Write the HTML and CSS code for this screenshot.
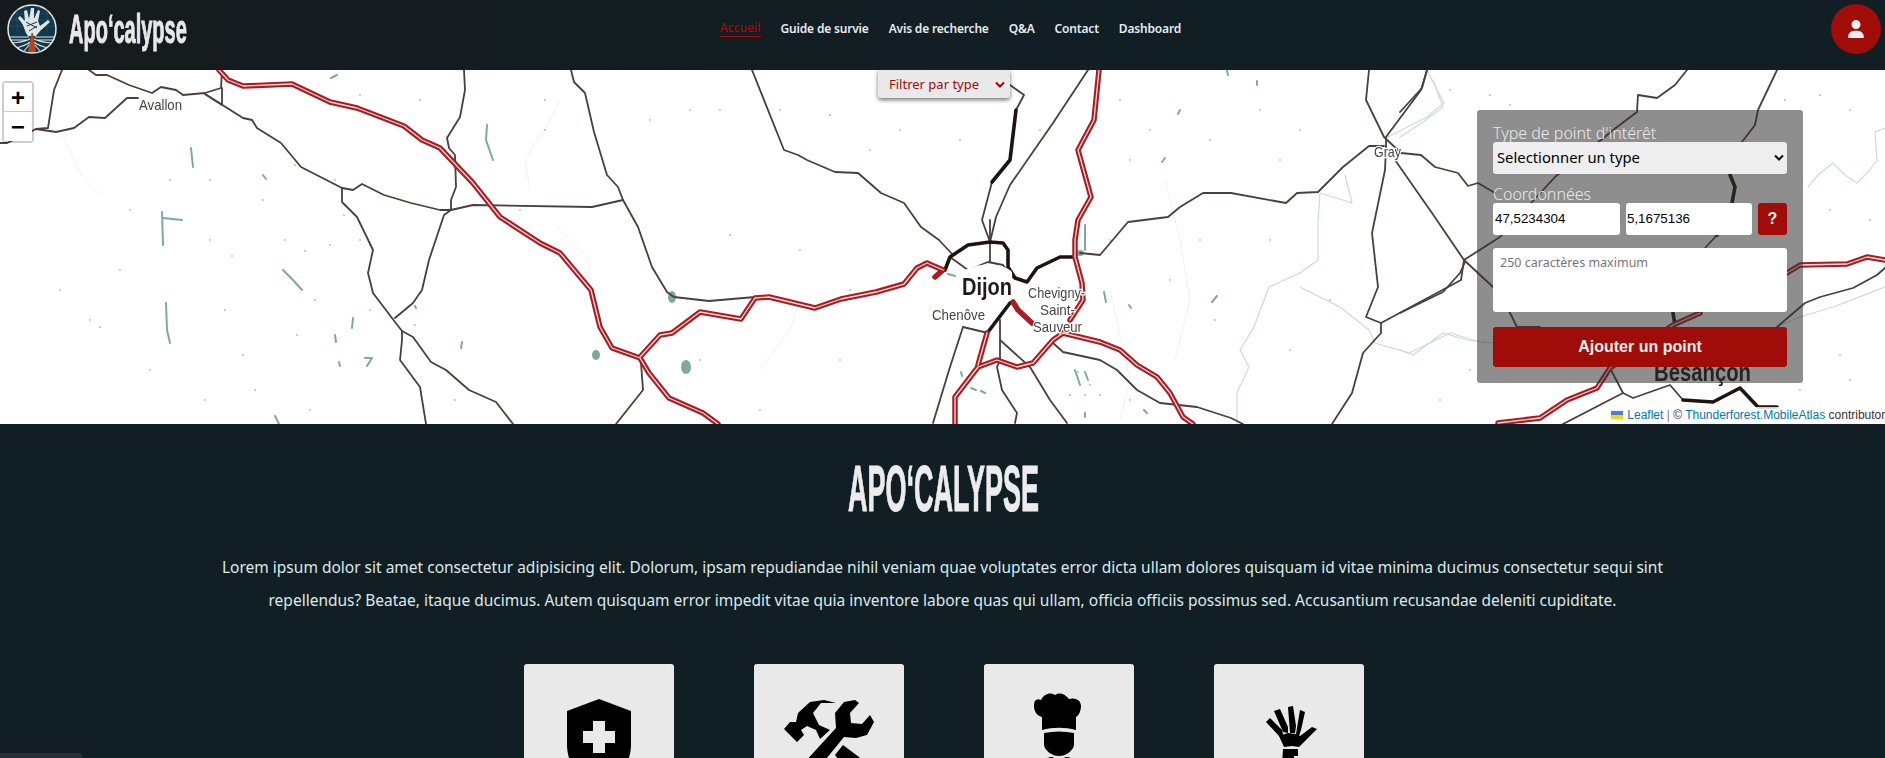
FILE: index.html
```html
<!DOCTYPE html>
<html lang="fr">
<head>
<meta charset="utf-8">
<title>Apo'calypse</title>
<link rel="stylesheet" href="styles.css">
</head>
<body>
<header class="topbar">
  <a class="brand">
    <svg class="logo" viewBox="0 0 50 50">
      <circle class="logo-disc" cx="25" cy="25" r="24"/>
      <path class="logo-grid" d="M8 10H42M4 16H46M2 22H48M10 4V30M18 2V30M32 2V30M40 4V30"/>
      <path class="logo-hand" d="M19 29L16 21L11 14L13 12L18 17L17 7L20 6L22 15L24 4L27 4L27 15L31 6L33 7L31 17L33 22L41 16L43 18L33 27L29 32L21 32Z"/>
      <path class="logo-line" d="M19 18L30 24M20 22L30 18M22 27L30 22"/>
      <path class="logo-land" d="M3 33H22M28 33H47M4 36H20M30 36H46M5 39C12 38 18 38 23 35M45 39C38 38 32 38 27 35M10 44C15 42 20 41 23 38M40 44C35 42 30 41 27 38M17 47L23 40M33 47L27 40"/>
      <polygon class="logo-tower" points="24.5,29 26,29 29,48 21,48"/>
    </svg>
    <span class="wordmark"><span class="wordmark-inner">Apo‘calypse</span></span>
  </a>
  <nav class="links">
    <a class="link active">Accueil</a>
    <a class="link">Guide de survie</a>
    <a class="link">Avis de recherche</a>
    <a class="link">Q&amp;A</a>
    <a class="link">Contact</a>
    <a class="link">Dashboard</a>
  </nav>
  <a class="avatar">
    <svg class="avatar-icon" viewBox="0 0 448 512"><path d="M224 256A128 128 0 1 0 224 0a128 128 0 1 0 0 256zm-45.700 48C79.800 304 0 383.800 0 482.300C0 498.700 13.300 512 29.700 512H418.300c16.400 0 29.700-13.300 29.700-29.700C448 383.800 368.200 304 269.700 304H178.300z"/></svg>
  </a>
</header>

<main>
  <section class="map">
    <svg class="map-canvas" viewBox="0 70 1885 354">
      <g class="river">
        <polyline points="1300,273 1269,287 1254,327 1240,350 1249,367 1237,393 1237,424"/>
        <polyline points="1300,273 1318,260 1318,223 1320,193 1352,203 1345,175"/>
        <polyline points="1300,287 1340,307 1369,330 1375,343 1409,353 1450,333 1484,343"/>
        <polyline points="1386,138 1427,117 1444,103 1432,80 1427,70"/>
        <polyline points="1433,80 1443,107 1423,122 1400,137"/>
        <polyline points="1400,350 1413,355 1443,333 1467,340 1493,343"/>
        <polyline points="1808,187 1818,175 1833,163 1845,175 1857,183 1868,172 1877,160 1875,132 1885,128"/>
        <polyline points="1885,287 1833,307 1800,317 1777,327"/>
      </g>
      <g class="river-faint">
        <polyline points="62,133 78,168 83,177 100,195"/>
        <polyline points="530,190 525,160 550,120 560,100"/>
        <polyline points="555,225 590,260 585,290"/>
        <polyline points="760,370 790,330 800,300"/>
        <polyline points="1165,180 1180,240 1190,300 1175,360"/>
        <polyline points="1110,290 1130,380 1120,420"/>
      </g>
      <path class="specks" d="M232 256h0M305 251h0M100 327h0M243 355h0M297 335h0M344 215h0M263 200h0M120 270h0M210 240h0M90 320h0M150 370h0M60 290h0M285 240h0M315 300h0M370 310h0M330 245h0M360 240h0M335 180h0M295 165h0M210 180h0M170 180h0M130 210h0M225 310h0M255 390h0M205 400h0M310 410h0M370 245h0M415 325h0M455 400h0M520 210h0M545 130h0M360 95h0M420 100h0M545 100h0M650 120h0M690 110h0M720 110h0M780 110h0M830 115h0M870 150h0M900 130h0M960 140h0M730 235h0M800 250h0M850 290h0M840 360h0M760 410h0M700 360h0M1040 130h0M1120 100h0M1130 160h0M1150 130h0M1210 140h0M1260 110h0M1300 130h0M1280 160h0M1110 240h0M1170 280h0M1200 240h0M1215 320h0M1270 240h0M1290 350h0M1330 300h0M1450 90h0M1490 95h0M1510 105h0M1470 370h0M1440 400h0M1785 100h0M1820 95h0M1850 110h0M1830 210h0M1870 220h0M1800 390h0M1850 380h0M1840 355h0M1130 400h0M1100 395h0M1070 395h0M1085 395h0M1078 372h0M1090 385h0"/>
      <g class="lake">
        <polyline points="487,125 486,140 493,160"/>
        <polyline points="191,148 193,167"/>
        <polyline points="162,212 163,245"/>
        <polyline points="163,218 182,220"/>
        <polyline points="166,303 167,330 170,343"/>
        <polyline points="283,270 293,280 302,290"/>
        <polyline points="331,78 337,75"/>
        <polyline points="263,175 266,179"/>
        <polyline points="335,335 336,342"/>
        <polyline points="353,318 352,328"/>
        <polyline points="365,358 372,358 367,366"/>
        <polyline points="339,362 340,366"/>
        <polyline points="275,416 279,424"/>
        <polyline points="462,342 461,348"/>
        <polyline points="415,306 416,308"/>
        <polyline points="1217,296 1212,302"/>
        <polyline points="1165,158 1162,162"/>
        <polyline points="1180,110 1178,114"/>
        <polyline points="1227,70 1228,75"/>
        <polyline points="1257,81 1257,85"/>
        <polyline points="1085,225 1085,250"/>
        <polyline points="1075,370 1080,385"/>
        <polyline points="1085,372 1088,380"/>
        <polyline points="971,388 976,390"/>
        <polyline points="981,391 985,393"/>
        <polyline points="961,372 962,376"/>
        <polyline points="1104,292 1106,302"/>
        <polyline points="1129,305 1131,308"/>
        <polyline points="1085,413 1085,417"/>
        <polyline points="1144,410 1147,413"/>
        <polyline points="948,274 955,276"/>
      </g>
      <g class="lake-fill">
        <ellipse cx="596" cy="355" rx="4" ry="5"/>
        <ellipse cx="686" cy="367" rx="5" ry="7"/>
        <ellipse cx="672" cy="297" rx="4" ry="6"/>
        <ellipse cx="1080" cy="253" rx="4" ry="3"/>
      </g>
      <g class="road">
        <polyline points="62,70 54,90 48,128 36,129"/>
        <polyline points="89,70 96,75 107,75 129,85 152,93 161,87 176,90 183,95 205,93 221,88 222,70"/>
        <polyline points="222,88 222,105 205,94"/>
        <polyline points="0,143 7,143 36,129 56,132 74,128 89,117 105,118 127,98 138,98"/>
        <polyline points="205,94 243,118 252,120 257,128 281,143 301,167 342,188 353,190 362,184 384,195 411,203 440,210 451,210 473,205 592,207 623,200"/>
        <polyline points="571,70 574,82 585,93 594,132 607,175 618,187 623,200 638,227 652,267 667,292 674,297 709,301 755,297"/>
        <polyline points="464,70 465,90 460,117 447,138 449,148 455,155 456,187 451,200 451,210 444,215 429,260 422,290 413,303 395,318"/>
        <polyline points="342,188 342,202 357,217 373,250 368,273 373,293 395,322 402,331 402,340 400,360 420,387 426,424"/>
        <polyline points="402,331 413,337 431,362 446,370 469,390 496,402 513,424"/>
        <polyline points="641,363 643,390 616,424"/>
        <polyline points="752,70 784,150 798,155 807,160 835,172 858,173 881,193 904,203 921,227 939,240 953,255"/>
        <polyline points="1010,85 1024,95 1016,110"/>
        <polyline points="1010,160 992,182 982,220 990,242"/>
        <polyline points="1088,70 1053,123 1010,185 996,217 990,242"/>
        <polyline points="990,220 990,262"/>
        <polyline points="950,257 968,270 988,262 1003,265 1013,278"/>
        <polyline points="963,327 988,333"/>
        <polyline points="963,327 950,367 933,423"/>
        <polyline points="1000,320 1000,360 997,367 1002,390 1017,413 1015,423"/>
        <polyline points="1000,340 1030,367 1050,400 1067,423"/>
        <polyline points="1053,343 1063,352 1100,360 1117,370 1137,390 1160,403 1197,407 1231,418 1243,424"/>
        <polyline points="1080,253 1100,255 1128,222 1168,217 1180,207 1203,193 1231,193 1286,203 1297,193 1318,192 1343,167 1369,146 1384,146"/>
        <polyline points="1369,70 1366,100 1384,137 1401,153 1421,155 1435,167 1458,173 1468,186 1478,183 1495,193"/>
        <polyline points="1427,70 1421,90 1386,137 1386,147 1385,170 1372,233 1378,287 1366,317 1381,323 1381,333 1363,353 1352,393 1332,424"/>
        <polyline points="1395,160 1432,213 1464,260 1493,287 1510,313 1517,327 1540,327"/>
        <polyline points="1381,323 1461,280 1464,260 1500,237 1555,177 1617,127 1637,112 1638,95 1657,98 1675,85 1687,70"/>
        <polyline points="1400,313 1443,292 1460,273 1465,262"/>
        <polyline points="1400,112 1422,88 1427,70"/>
        <polyline points="1777,70 1758,110 1755,125 1742,142 1730,175"/>
        <polyline points="1717,235 1705,248"/>
        <polyline points="1777,327 1805,303 1820,297 1853,288 1877,275 1885,268"/>
        <polyline points="1610,368 1623,393 1633,398 1670,385 1683,400"/>
        <polyline points="1623,393 1563,424"/>
      </g>
      <g class="road-major">
        <polyline points="1016,110 1010,160 992,182"/>
        <polyline points="945,270 950,257 968,245 990,242 1003,243 1008,250 1008,267 1015,278 1027,282 1037,268 1060,257 1075,257"/>
        <polyline points="1010,303 988,332"/>
        <polyline points="1730,175 1735,187 1732,203 1717,235"/>
        <polyline points="1673,313 1675,325"/>
        <polyline points="1683,400 1713,402 1740,388 1758,407 1777,407"/>
      </g>
      <g class="motorway">
        <polyline points="219,70 228,80 243,86 292,84 330,102 357,108 404,126 422,140 440,148 473,183 500,217 540,243 560,253 591,290 600,327 612,348 640,358 649,373 669,398 703,413 718,424"/>
        <polyline points="640,357 660,335 672,333 700,312 741,319 755,298 769,297 815,308 841,299 876,292 904,284 917,268 927,263 943,270 935,277"/>
        <polyline points="1099,70 1094,120 1078,150 1091,197 1078,220 1075,240 1075,257 1082,283 1083,300 1070,320"/>
        <polyline points="1013,302 1018,310 1032,323"/>
        <polyline points="1063,333 1100,342 1120,350 1137,365 1157,377 1170,393 1183,417 1193,424"/>
        <polyline points="955,424 955,397 978,367 997,360 1017,367 1033,363 1053,340 1063,333"/>
        <polyline points="987,333 978,365"/>
        <polyline points="1787,273 1800,265 1847,264 1867,257 1885,260"/>
        <polyline points="1610,368 1673,325 1700,313"/>
        <polyline points="1498,423 1540,418 1567,400 1597,388 1610,368"/>
      </g>
      <g class="motorway-core">
        <polyline points="219,70 228,80 243,86 292,84 330,102 357,108 404,126 422,140 440,148 473,183 500,217 540,243 560,253 591,290 600,327 612,348 640,358 649,373 669,398 703,413 718,424"/>
        <polyline points="640,357 660,335 672,333 700,312 741,319 755,298 769,297 815,308 841,299 876,292 904,284 917,268 927,263 943,270"/>
        <polyline points="1099,70 1094,120 1078,150 1091,197 1078,220 1075,240 1075,257 1082,283 1083,300 1070,320"/>
        <polyline points="1063,333 1100,342 1120,350 1137,365 1157,377 1170,393 1183,417 1193,424"/>
        <polyline points="955,424 955,397 978,367 997,360 1017,367 1033,363 1053,340 1063,333"/>
        <polyline points="987,333 978,365"/>
        <polyline points="1787,273 1800,265 1847,264 1867,257 1885,260"/>
        <polyline points="1610,368 1673,325 1700,313"/>
        <polyline points="1498,423 1540,418 1567,400 1597,388 1610,368"/>
      </g>
      <path class="city" d="M962 272C975 262 1003 262 1012 272L1013 298C1000 304 975 304 962 298Z"/>
      <text class="place" x="139" y="110" textLength="43" lengthAdjust="spacingAndGlyphs">Avallon</text>
      <text class="place" x="1374" y="157" textLength="27" lengthAdjust="spacingAndGlyphs">Gray</text>
      <text class="place place-big" x="962" y="295" textLength="50" lengthAdjust="spacingAndGlyphs">Dijon</text>
      <text class="place" x="932" y="320" textLength="53" lengthAdjust="spacingAndGlyphs">Chenôve</text>
      <text class="place" x="1028" y="298" textLength="57" lengthAdjust="spacingAndGlyphs">Chevigny-</text>
      <text class="place" x="1040" y="315" textLength="35" lengthAdjust="spacingAndGlyphs">Saint-</text>
      <text class="place" x="1033" y="332" textLength="49" lengthAdjust="spacingAndGlyphs">Sauveur</text>
      <text class="place place-city" x="1654" y="381" textLength="97" lengthAdjust="spacingAndGlyphs">Besançon</text>
    </svg>

    <div class="zoom">
      <a class="zoom-btn">+</a>
      <a class="zoom-btn">−</a>
    </div>

    <div class="filter">
      <span>Filtrer par type</span>
      <svg class="filter-chevron" viewBox="0 0 10 7"><path d="M1 1.500L5 5.500L9 1.500"/></svg>
    </div>

    <form class="panel">
      <label class="panel-label">Type de point d'intérêt</label>
      <div class="type-select">
        <span>Selectionner un type</span>
        <svg class="type-chevron" viewBox="0 0 10 7"><path d="M1 1.500L5 5.500L9 1.500"/></svg>
      </div>
      <label class="panel-label panel-label-gap">Coordonnées</label>
      <div class="coords">
        <input class="coord" value="47,5234304">
        <input class="coord coord-narrow" value="5,1675136">
        <a class="help">?</a>
      </div>
      <textarea class="note" placeholder="250 caractères maximum"></textarea>
      <button class="submit" type="button">Ajouter un point</button>
    </form>

    <div class="attribution">
      <svg class="flag" viewBox="0 0 12 8"><rect width="12" height="4" fill="#4c7be1"/><rect y="4" width="12" height="4" fill="#ffd500"/></svg>
      <a>Leaflet</a> <span class="sep">|</span> © <a>Thunderforest.MobileAtlas</a> contributors
    </div>
  </section>

  <section class="intro">
    <h1 class="title"><span class="title-inner">APO‘CALYPSE</span></h1>
    <p class="lede">Lorem ipsum dolor sit amet consectetur adipisicing elit. Dolorum, ipsam repudiandae nihil veniam quae voluptates error dicta ullam dolores quisquam id vitae minima ducimus consectetur sequi sint<br>repellendus? Beatae, itaque ducimus. Autem quisquam error impedit vitae quia inventore labore quas qui ullam, officia officiis possimus sed. Accusantium recusandae deleniti cupiditate.</p>
    <div class="cards">
      <article class="card">
        <svg class="card-icon" viewBox="524 664 150 110">
          <path d="M599 699L631 711V745C631 752 629 758 627 764H571C569 758 567 752 567 745V711Z"/>
          <path class="knock" d="M593 721H605V731H615V743H605V753H593V743H583V731H593Z"/>
        </svg>
      </article>
      <article class="card">
        <svg class="card-icon" viewBox="754 664 150 110">
          <path d="M784 729L797 742L804 735L801 730L807 726L816 730L820 739L830 730L819 725L813 713L821 703L836 703L824 700L810 702L798 713L796 722L790 722Z"/>
          <path d="M844 702L855 700L859 703L850 713L851 723L862 724L870 715L874 722L867 735L856 738L844 737L822 764H803L836 728L835 713Z"/>
          <path d="M843 745L859 757L865 764H842L835 755Z"/>
        </svg>
      </article>
      <article class="card">
        <svg class="card-icon" viewBox="984 664 150 110">
          <path d="M1042 730V717C1036 715 1034 711 1034 705C1034 700 1037 698 1041 700C1044 694 1050 692 1055 695C1060 692 1065 694 1069 699C1075 697 1081 700 1081 706C1081 712 1078 716 1076 717V730C1065 727 1053 727 1042 730Z"/>
          <path d="M1044 733C1054 731 1064 731 1074 733V745C1073 751 1066 756 1059 756C1052 756 1045 751 1044 745Z"/>
          <path d="M1040 764C1044 759 1048 757 1052 757L1059 760L1066 757C1070 757 1074 759 1078 764Z"/>
        </svg>
      </article>
      <article class="card">
        <svg class="card-icon" viewBox="1214 664 150 110">
          <path d="M1266 722L1270 718L1282 730L1285 742L1279 736Z"/>
          <path d="M1274 711L1280 709L1288 727L1288 733L1283 732Z"/>
          <path d="M1288 707L1293 706L1296 726L1295 733L1290 733Z"/>
          <path d="M1300 710L1305 712L1301 730L1299 736L1296 734Z"/>
          <path d="M1312 727L1317 729L1299 747L1292 746L1284 747L1279 736L1288 733L1296 734L1300 736Z"/>
          <path d="M1283 749H1298V756H1294V764H1282Z"/>
        </svg>
      </article>
    </div>
  </section>
</main>
<div class="corner-tab"></div>
</body>
</html>
```
FILE: styles.css
```css
* { box-sizing: border-box; }
html, body { margin: 0; height: 758px; overflow: hidden; }
body { background: #111f25; font-family: "Noto Sans", "Liberation Sans", sans-serif; color: #e9e9e9; position: relative; }

.topbar {
  height: 70px;
  display: flex;
  align-items: flex-start;
  padding: 4px 4px 0 7px;
  background: linear-gradient(90deg, #161a1c 0%, #111f25 60%, #111f25 100%);
}
.brand { display: flex; align-items: center; width: 180px; height: 50px; }
.logo { width: 50px; height: 50px; flex: none; }
.logo-disc { fill: #13384a; stroke: #e3e9e9; stroke-width: 1.5; }
.logo-grid { fill: none; stroke: #2f566a; stroke-width: .5; }
.logo-hand { fill: #dfe7e6; }
.logo-line { fill: none; stroke: #13384a; stroke-width: 1; }
.logo-land { fill: none; stroke: #dfe7e6; stroke-width: 1.1; }
.logo-tower { fill: #b5461f; }
.wordmark { display: block; margin-left: 12px; height: 50px; }
.wordmark-inner {
  display: inline-block;
  font: 700 40px/50px "Liberation Sans Narrow", "Liberation Sans", sans-serif;
  color: #e8e8e8;
  -webkit-text-stroke: 1px #e8e8e8;
  transform: scaleX(.5);
  transform-origin: 0 50%;
  white-space: nowrap;
}
.links { display: flex; gap: 20px; margin-left: 533px; height: 48px; align-items: center; }
.link { font-size: 12px; font-weight: 600; letter-spacing: -.18px; color: #e6ebee; line-height: 17px; white-space: nowrap; }
.link.active { color: #a00c08; border-bottom: 1px solid #a00c08; font-weight: 500; letter-spacing: 0; }
.avatar {
  margin-left: auto;
  width: 50px; height: 50px;
  border-radius: 50%;
  background: #a00c08;
  display: flex; align-items: center; justify-content: center;
}
.avatar-icon { width: 16px; height: 18px; fill: #eee; }

.map { position: relative; height: 354px; background: #fff; overflow: hidden; }
.map-canvas { display: block; width: 1885px; height: 354px; filter: blur(.45px); }
.map-canvas polyline { fill: none; stroke-linejoin: round; stroke-linecap: round; }
.river polyline { stroke: #c9dcd6; stroke-width: 1.2; }
.river-faint polyline { stroke: #edf3f1; stroke-width: 1; }
.specks { fill: none; stroke: #a9c7bd; stroke-width: 2; stroke-linecap: round; }
.lake polyline { stroke: #7fa99e; stroke-width: 2; }
.lake-fill { fill: #7fa99e; }
.road polyline { stroke: #4a3f3b; stroke-width: 1.800; }
.road-major polyline { stroke: #1f1310; stroke-width: 3.600; }
.motorway polyline { stroke: #a81d22; stroke-width: 5.500; }
.motorway-core polyline { stroke: #efd9d9; stroke-width: 1.300; }
.city { fill: #fff; }
.place { font: 400 15px "Liberation Sans", sans-serif; fill: #4a4340; stroke: #fff; stroke-width: 2.500; paint-order: stroke; }
.place-big { font-size: 24px; font-weight: 700; fill: #231a17; }
.place-city { font-size: 25px; font-weight: 700; fill: #1d1613; stroke: none; }

.zoom {
  position: absolute; left: 2px; top: 11px;
  width: 32px;
  border: 2px solid rgba(0,0,0,.2);
  border-radius: 4px;
  background-clip: padding-box;
  display: flex; flex-direction: column;
}
.zoom-btn {
  display: block; height: 29px; background: #fff;
  padding-top: 2px;
  font: 700 24px/29px "Liberation Mono", monospace;
  color: #000; text-align: center;
  border-bottom: 1px solid #ccc;
  overflow: hidden;
}
.zoom-btn:last-child { border-bottom: 0; }

.filter {
  position: absolute; left: 878px; top: 0;
  width: 132px; height: 28px;
  display: flex; align-items: center; justify-content: space-between;
  padding: 0 4px 0 11px;
  background: #e9e9e9;
  border-radius: 0 0 3px 3px;
  box-shadow: 0 2px 4px rgba(0,0,0,.55);
  color: #a00c08;
  font-size: 13px;
}
.filter-chevron { width: 10px; height: 7px; margin-right: 1px; }
.filter-chevron path, .type-chevron path { fill: none; stroke-width: 2; }
.filter-chevron path { stroke: #a00c08; }
.type-chevron path { stroke: #111; }

.panel {
  position: absolute; left: 1477px; top: 40px;
  width: 326px; height: 273px;
  padding: 15px 16px 0;
  background: rgba(50,50,50,.55);
  border-radius: 3px;
  display: flex; flex-direction: column;
}
.panel-label { font-size: 16px; line-height: 17px; color: #e9e9e9; font-weight: 300; }
.panel-label-gap { margin-top: 12px; }
.type-select {
  height: 32px; background: #eee; border-radius: 3px;
  display: flex; align-items: center; justify-content: space-between;
  padding: 0 3px 2px 4px;
  color: #000; font-size: 14.800px;
}
.type-chevron { width: 10px; height: 7px; }
.coords { display: flex; gap: 6px; height: 32px; }
.coord {
  width: 127px; height: 32px; border: 0; border-radius: 3px; padding: 0 2px 2px;
  background: #fff; color: #000; font: 13.333px "Liberation Sans", sans-serif;
}
.coord-narrow { width: 126px; padding: 0 1px 2px; }
.help {
  width: 29px; height: 32px; border-radius: 3px; background: #a00c08; color: #eee;
  font: 700 16px/32px "Liberation Sans", sans-serif; text-align: center;
}
.note {
  display: block; margin-top: 13px; width: 294px; height: 64px; border: 0; border-radius: 3px;
  padding: 7px 7px; resize: none; background: #fff;
  font: 12.500px/16px "Noto Sans", sans-serif;
}
.note::placeholder { color: #757575; opacity: 1; }
.submit {
  margin-top: 15px; height: 40px; border: 0; border-radius: 3px;
  background: #a00c08; color: #eee;
  font: 700 16px "Liberation Sans", sans-serif;
}
.attribution {
  position: absolute; left: 1606px; bottom: 0; width: 279px; height: 17px;
  padding-left: 5px;
  background: rgba(255,255,255,.8);
  font: 12px/17px "Liberation Sans", sans-serif;
  color: #333;
  white-space: nowrap;
  overflow: hidden;
}
.attribution a { color: #0078a8; }
.flag { width: 12px; height: 8px; margin-right: 1px; }
.sep { color: #777; }

.intro { display: flex; flex-direction: column; align-items: center; }
.title { margin: 29px 0 0; height: 72px; width: 190px; }
.title-inner {
  display: inline-block;
  font: 700 65px/72px "Liberation Sans Narrow", "Liberation Sans", sans-serif;
  color: #ececec;
  -webkit-text-stroke: 1px #ececec;
  transform: scaleX(.415);
  transform-origin: 0 50%;
  white-space: nowrap;
}
.lede {
  margin: 26px 0 0;
  font-size: 15.500px;
  line-height: 33px;
  color: #dce9ea;
  text-align: center;
  white-space: nowrap;
}
.cards { display: flex; gap: 80px; margin: 47px 0 0 3px; }
.card { width: 150px; height: 220px; background: #e9e9e9; border-radius: 3px; overflow: hidden; }
.card-icon { display: block; width: 150px; height: 110px; fill: #000; }
.knock { fill: #e9e9e9; }
.corner-tab {
  position: absolute; left: 0; top: 753px; width: 82px; height: 5px;
  background: #2b2d38; border-radius: 0 3px 0 0;
}
```
